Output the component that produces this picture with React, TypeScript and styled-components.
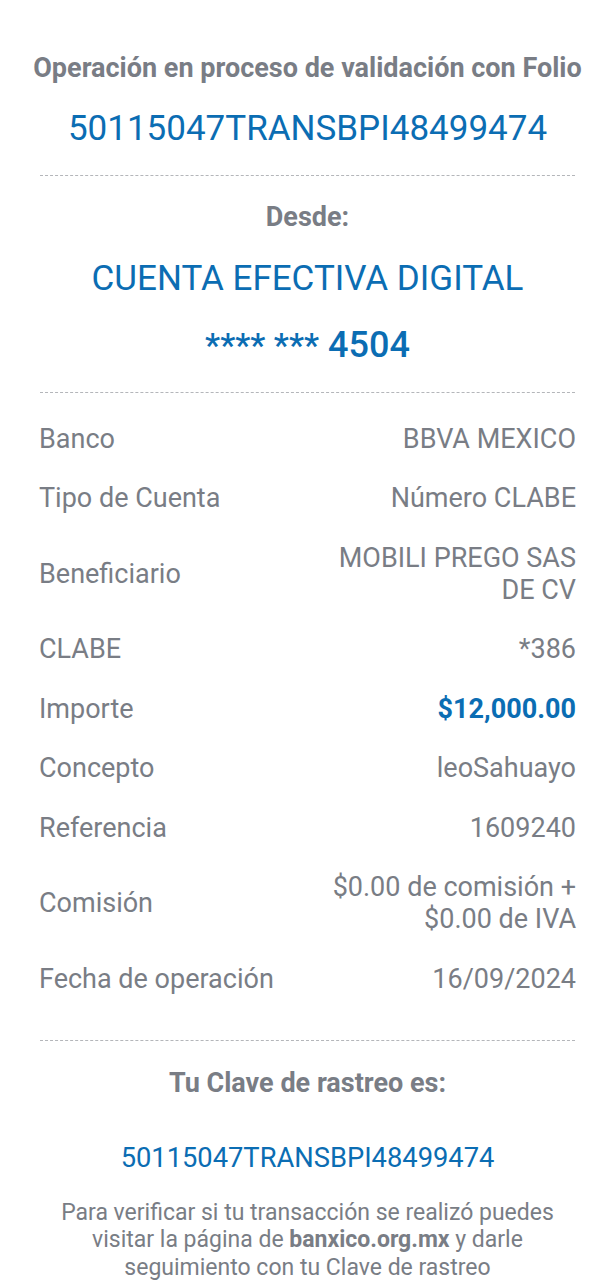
import React from 'react';
import styled, { createGlobalStyle } from 'styled-components';

const GlobalStyle = createGlobalStyle`
  body {
    margin: 0;
    background: #fff;
    font-family: Roboto, "Noto Sans", sans-serif;
  }
`;

const gray = '#797d85';
const blue = '#0b6db3';

const Page = styled.div`
  width: 615px;
  height: 1280px;
  overflow: hidden;
  display: flex;
  flex-direction: column;
  align-items: center;
  padding: 0 39px;
  box-sizing: border-box;
`;

const Heading = styled.div<{ $top: number }>`
  margin-top: ${(p) => p.$top}px;
  font-size: 27px;
  font-weight: 700;
  color: ${gray};
  line-height: 32px;
  text-align: center;
  white-space: nowrap;
`;

const BigBlue = styled.div<{ $size: number; $top: number; $weight?: number }>`
  margin-top: ${(p) => p.$top}px;
  font-size: ${(p) => p.$size}px;
  font-weight: ${(p) => p.$weight ?? 400};
  color: ${blue};
  line-height: 42px;
  text-align: center;
  white-space: nowrap;
`;

const Stars = styled.span`
  font-size: 34px;
`;

const Divider = styled.hr<{ $top: number }>`
  align-self: stretch;
  margin: ${(p) => p.$top}px 1px 0;
  border: none;
  border-top: 1px dashed #b4b6ba;
  height: 0;
`;

const Rows = styled.div`
  align-self: stretch;
  display: flex;
  flex-direction: column;
  margin-top: 16px;
`;

const Row = styled.div`
  display: flex;
  justify-content: space-between;
  align-items: center;
  padding: 13.75px 0;
  font-size: 27px;
  line-height: 32px;
  color: ${gray};
`;

const Label = styled.div`
  white-space: nowrap;
`;

const Value = styled.div<{ $accent?: boolean }>`
  text-align: right;
  max-width: 260px;
  color: ${(p) => (p.$accent ? blue : gray)};
  font-weight: ${(p) => (p.$accent ? 700 : 400)};
`;

const Note = styled.p`
  margin: 20px 0 0;
  font-size: 23px;
  line-height: 27.5px;
  color: ${gray};
  text-align: center;
  width: 510px;

  b {
    font-weight: 700;
  }
`;

const rows: { label: string; value: React.ReactNode; accent?: boolean }[] = [
  { label: 'Banco', value: 'BBVA MEXICO' },
  { label: 'Tipo de Cuenta', value: 'Número CLABE' },
  { label: 'Beneficiario', value: 'MOBILI PREGO SAS DE CV' },
  { label: 'CLABE', value: '*386' },
  { label: 'Importe', value: '$12,000.00', accent: true },
  { label: 'Concepto', value: 'leoSahuayo' },
  { label: 'Referencia', value: '1609240' },
  { label: 'Comisión', value: <>$0.00 de comisión +<br />$0.00 de IVA</> },
  { label: 'Fecha de operación', value: '16/09/2024' },
];

const App: React.FC = () => {
  return (
    <>
      <GlobalStyle />
      <Page>
        <Heading $top={52}>Operación en proceso de validación con Folio</Heading>
        <BigBlue $size={35} $top={24}>50115047TRANSBPI48499474</BigBlue>
        <Divider $top={25} />
        <Heading $top={25}>Desde:</Heading>
        <BigBlue $size={35} $top={25}>CUENTA EFECTIVA DIGITAL</BigBlue>
        <BigBlue $size={36} $top={24} $weight={500}>
          <Stars>**** ***</Stars> 4504
        </BigBlue>
        <Divider $top={26} />
        <Rows>
          {rows.map((r) => (
            <Row key={r.label}>
              <Label>{r.label}</Label>
              <Value $accent={r.accent}>{r.value}</Value>
            </Row>
          ))}
        </Rows>
        <Divider $top={31} />
        <Heading $top={26}>Tu Clave de rastreo es:</Heading>
        <BigBlue $size={27.3} $top={38}>50115047TRANSBPI48499474</BigBlue>
        <Note>
          Para verificar si tu transacción se realizó puedes visitar la página de <b>banxico.org.mx</b> y darle
          seguimiento con tu Clave de rastreo
        </Note>
      </Page>
    </>
  );
};

export default App;
